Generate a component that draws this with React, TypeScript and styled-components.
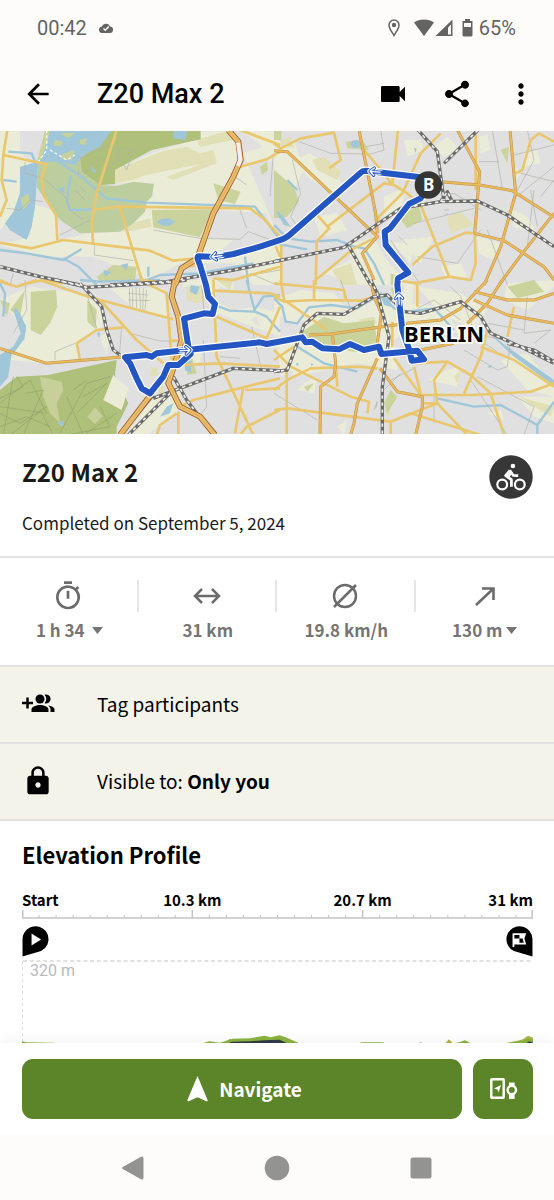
import React from "react";
import styled, { createGlobalStyle } from "styled-components";
import { MdArrowBack, MdVideocam, MdShare, MdMoreVert, MdLock, MdOutlineTimer } from "react-icons/md";

const sans = `"Noto Sans CJK SC", "Noto Sans", sans-serif`;
const roboto = `Roboto, "Liberation Sans", sans-serif`;

const GlobalStyle = createGlobalStyle`
  *, *::before, *::after { box-sizing: border-box; }
  body { margin: 0; background: #fff; color: #000; font-family: ${sans}; }
  h1, h2, p { margin: 0; }
  button { border: 0; padding: 0; background: none; color: inherit; font: inherit; cursor: pointer; }
  svg { display: block; flex: none; }
`;

const Screen = styled.div`
  min-height: 100vh;
  display: flex;
  flex-direction: column;
  overflow-x: hidden;
`;

const StatusBar = styled.div`
  display: flex;
  align-items: center;
  justify-content: space-between;
  height: 56px;
  padding: 0 38px 0 37px;
  background: #fdfcfa;
  color: #646462;
  font: 400 20px/24px ${roboto};
`;

const StatusGroup = styled.div<{ $gap: number }>`
  display: flex;
  align-items: center;
  gap: ${(p) => p.$gap}px;
`;

const AppBar = styled.header`
  display: flex;
  align-items: center;
  height: 75px;
  padding: 0 17px 0 22px;
  background: #fdfcfa;
`;

const AppTitle = styled.h1`
  flex: 1;
  margin-left: 43px;
  font: 500 27px/36px ${roboto};
`;

const AppActions = styled.div`
  display: flex;
  gap: 32px;
`;

const IconButton = styled.button`
  display: grid;
  place-items: center;
  width: 32px;
  height: 32px;
`;

const MapView = styled.svg`
  width: 100%;
  height: auto;
  background: #e0e0e0;
`;

const Summary = styled.section`
  display: flex;
  justify-content: space-between;
  padding: 21px 21px 21px 22px;
  border-bottom: 2px solid #e2e2e2;
`;

const TourTitle = styled.h2`
  color: #1a1a1a;
  font-size: 24px;
  line-height: 34px;
`;

const TourDate = styled.p`
  margin-top: 22px;
  color: #1a1a1a;
  font-size: 17px;
  line-height: 24px;
`;

const Stats = styled.section`
  display: grid;
  grid-template-columns: repeat(4, 1fr);
  padding: 22px 0;
  border-bottom: 2px solid #e2e2e2;
`;

const StatCell = styled.div`
  display: flex;
  flex-direction: column;
  align-items: center;
  gap: 6px;
  padding-bottom: 1px;
  color: #6b6b6b;
`;

const StatIcon = styled.div`
  display: grid;
  place-items: center;
  width: 100%;
  height: 32px;
  ${StatCell}:not(:last-child) & {
    border-right: 2px solid #e6e6e6;
  }
`;

const StatValue = styled.div<{ $gap?: number }>`
  display: flex;
  align-items: center;
  gap: ${(p) => p.$gap ?? 0}px;
  color: #757575;
  font-size: 17px;
  font-weight: 700;
  line-height: 24px;
`;

const OptionRow = styled.button`
  display: flex;
  align-items: center;
  height: 77px;
  padding: 0 22px 1px;
  border-bottom: 2px solid #e1e1df;
  background: #f4f3ea;
  font-size: 19px;
  line-height: 28px;
  text-align: left;
`;

const OptionIcon = styled.span`
  width: 75px;
`;

const Elevation = styled.section`
  padding: 18px 21px 0 22px;
`;

const SectionTitle = styled.h2`
  font-size: 22px;
  line-height: 30px;
`;

const RulerLabels = styled.div`
  display: grid;
  grid-template-columns: repeat(6, 1fr);
  margin-top: 21px;
  font-size: 15px;
  font-weight: 700;
  line-height: 20px;
  white-space: nowrap;
`;

const RulerLabel = styled.span<{ $span?: number; $align: string }>`
  grid-column: span ${(p) => p.$span ?? 1};
  justify-self: ${(p) => p.$align};
`;

const Chart = styled.svg`
  width: 100%;
  height: auto;
`;

const ActionBar = styled.div`
  display: flex;
  gap: 11px;
  padding: 16px 21px 16px 22px;
  background: #fff;
  box-shadow: 0 -2px 12px rgba(0, 0, 0, 0.05);
`;

const GreenButton = styled.button<{ $grow?: boolean }>`
  display: flex;
  align-items: center;
  justify-content: center;
  gap: 11px;
  flex: ${(p) => (p.$grow ? "1" : "0 0 60px")};
  height: 60px;
  padding-left: ${(p) => (p.$grow ? 5 : 2)}px;
  border-radius: 11px;
  background: #5c8529;
  color: #fff;
  font-size: 19px;
  font-weight: 700;
  line-height: 28px;
`;

const SystemNav = styled.nav`
  flex: 1;
  display: flex;
  align-items: center;
  justify-content: center;
  gap: 112px;
  min-height: 64px;
  background: #fdfcfa;
`;

/* The map is drawn as four tiles; each layer lists one path per tile: NW, NE, SW, SE. */
const tileOrigins = [
  [0, 0],
  [822, 0],
  [0, 450],
  [822, 450],
];

type Layer = { tiles: string[]; fill?: string; strokes?: [string, number, string?][] };

const mapLayers: Layer[] = [
  {
    fill: "#ebecd7",
    tiles: [
      "M345 120 465 65 600 25V0H690L712 60 705 120 640 240 590 380 520 385 440 355 380 250 460 200V160H345ZM0 0H60V60L100 120 60 160 50 240 0 300ZM105 225 160 240 180 300 170 330 270 310 440 300 580 325 700 330 640 380 830 330 800 250 660 240 700 120 790 90 840 95V0H720L790 50 730 70 840 330V465H760L700 400 540 400 450 450 280 380 130 380 60 360 0 345 90 320Z",
      "M0 40 60 30 90 120 60 180 45 260 0 230ZM60 90 105 70 180 110 205 170 175 190 100 140ZM120 260 190 250 220 300 140 320ZM330 200 395 170 380 240 330 260ZM225 345 300 320 330 380 400 465H250L150 430 230 390ZM350 335 420 345 410 400ZM480 50 520 20 560 60 510 80ZM615 20 640 15 650 60 620 70ZM700 230 760 260 790 310 720 290ZM725 110 740 130 720 160ZM390 30 440 30 450 60 400 80ZM380 330 480 320 440 400ZM610 320 680 340 660 390 615 370ZM500 410 560 400 580 440 520 450ZM750 70 790 60 800 100 750 110Z",
      "M0 60 90 20 240 40 310 80 305 140 230 190 235 235 140 250 30 240 50 200 75 160 20 80ZM330 25H490L505 110 400 85ZM330 150 320 225 300 170ZM550 20 620 15 650 100 840 170V100L760 80 700 90 640 60 660 20 700 30 700 0H545ZM380 465 460 350 545 330 530 400 440 465ZM580 220 605 210 600 245 570 255ZM750 120 770 110 780 140Z",
      "M80 150 110 100 190 105 310 60 500 80 560 160 390 160 360 180 370 270 250 250 60 290 30 200ZM0 60 80 30 180 40 220 90 60 130 0 100ZM395 0 420 10 410 120 380 100ZM430 20 560 40 640 90 600 150 500 100ZM460 300 520 270 560 260 550 320ZM700 10 840 0V20L760 90 690 60ZM680 240 760 220 840 320V350L760 330ZM730 350 840 350V430L780 410ZM10 200 60 180 70 260 20 290ZM90 310 130 290 120 340 70 330ZM190 440 220 420 210 465ZM640 400 680 390 690 420Z",
    ],
  },
  {
    fill: "#e0dfb6",
    tiles: [
      "M345 120 490 62 560 50 600 70 640 60 650 95 560 110 440 135 400 150 345 160ZM590 30 690 0 700 30 600 50ZM500 140 640 90 650 100 520 150ZM380 285 450 265 455 290 370 305Z",
      "M520 260 560 245 600 285 530 310ZM115 90 150 80 200 125 190 150 130 120ZM175 420 230 400 250 465H200ZM20 30 50 20 60 50 20 55Z",
      "M455 265 470 260 475 285 450 290ZM560 20 615 15 625 60 590 70 560 60ZM650 0H700L690 30ZM470 310 490 300 490 340 475 345ZM720 405 745 400 740 425Z",
      "M360 20 380 20 370 80 350 60ZM735 350 840 380 830 410ZM250 120 300 110 310 130ZM330 390 350 380 345 420ZM540 290 560 270 550 310Z",
    ],
  },
  {
    fill: "#cad39c",
    tiles: [
      "M135 0H345L250 90 110 100ZM455 240 640 238 600 322 460 292ZM640 160 722 185 705 222 655 210ZM290 440 340 405 410 410 405 450 300 455ZM780 110 800 95 805 120 785 135Z",
      "M0 120 60 170 75 215 40 260 0 265ZM365 250 435 230 445 270 400 295ZM215 35 265 30 285 60 220 55ZM0 0H22V30H0ZM350 430 380 440 370 465H350ZM680 60 705 50 700 100Z",
      "M92 35 168 30 172 80 150 130 122 165 92 150ZM262 60 290 90 287 148 262 125ZM30 90 75 30 60 110ZM0 60 30 70 20 110ZM560 285 575 230 590 280Z",
      "M85 155 150 110 210 130 300 120 312 205 240 215 150 200 85 180ZM700 20 780 0 810 35 730 55ZM90 320 120 310 100 335ZM330 370 350 330 370 350 340 400ZM350 25 370 20 365 60Z",
    ],
  },
  {
    fill: "#bccd9e",
    tiles: [
      "M115 95 240 80 245 125 300 165 350 168 400 155 462 162 455 200 440 215 435 245 400 280 360 305 240 310 180 270 165 250 130 200 110 170Z",
      "",
      "",
      "",
    ],
  },
  {
    fill: "#aec07a",
    tiles: [
      "M330 0H602V28L455 60 345 120V162L300 165 245 125 240 85 290 50Z",
      "",
      "M0 330 50 290 145 285 350 240 345 285 385 370 350 440 350 465H0Z",
      "",
    ],
  },
  {
    fill: "#c8d09a",
    tiles: ["", "", "M120 290 185 305 190 330 170 370 180 430 150 400 130 350ZM262 410 285 382 308 408 285 432Z", ""],
  },
  { fill: "#ebecd7", tiles: ["", "", "M340 285 385 325 365 390 310 360Z", ""] },
  {
    fill: "#9fc6d9",
    tiles: [
      "M150 0H335L300 50 250 75 225 105 165 95 120 95 140 40ZM60 110 115 95 110 160 105 230 95 290 80 330 30 300 15 280 40 245 60 190ZM520 0H562L555 30 520 25ZM470 275Q497 255 525 275 500 300 470 275ZM175 175 195 170 190 195ZM270 105 290 125 280 130ZM360 405 385 400 380 420ZM310 420 335 425 315 440ZM830 240 840 250V270Z",
      "M230 42A15 12 0 1 0 260 42 15 12 0 1 0 230 42ZM5 243 25 255 50 290 30 285ZM420 55 428 55 425 70Z",
      "M40 90 60 100 78 145 70 180 35 220 25 290 0 320V225L40 200 62 160ZM555 230 575 245 572 280 555 270ZM480 410 500 380 520 370 510 400ZM290 160 300 155 298 175ZM170 430 190 420 190 440ZM572 15 598 20 590 45 570 35Z",
      "M320 50 350 55 350 80 330 75ZM640 155 700 200 840 300V318L720 230ZM640 260 652 255 650 265ZM65 250 75 250 70 258ZM110 250 120 252 112 258Z",
    ],
  },
  {
    fill: "#c6d19c",
    tiles: [
      "M165 30 190 35 180 50 160 45ZM180 10 225 8 205 25ZM240 30 262 25 255 45 240 42ZM180 75 225 60 215 90 190 90ZM62 205 85 190 90 215 70 240Z",
      "",
      "",
      "",
    ],
  },
  {
    strokes: [["#9fc6d9", 7]],
    tiles: [
      "M155 80 250 145 320 205 440 218 765 230 800 275 840 330M212 135 200 215 210 240 280 238M0 360 80 370 190 390 245 357M190 385 235 410 290 465M400 465 480 435 600 430 760 400M735 380 745 465M445 410V440M25 65 95 70 105 95M10 150 50 155",
      "M0 285 40 325 110 335 190 330 240 350 270 355 300 400 330 465M0 340 100 358M40 150 70 180",
      "M45 85 75 140 70 175 40 215M0 10 15 40 10 110M630 70 690 92 760 95 790 50 840 45M740 0 765 95 800 110 840 155M240 0 300 5 480 0",
      "M0 55 25 80 35 125 70 130 105 82 170 75 250 85 320 40 360 85 400 95 480 85 540 150M70 200 150 250 250 275M490 355 600 380 680 375 790 435 840 365M790 435V465",
    ],
  },
  {
    strokes: [["#fafaf5", 4, "9 7"]],
    tiles: ["M140 0 140 60 115 95M150 60 200 90 225 75", "", "", ""],
  },
  {
    strokes: [["#b0b0ab", 2]],
    tiles: [
      "M75 95V130L130 145 200 205 210 240 250 270M240 85 320 50 400 60 380 120 345 60M250 130 300 80 330 120 360 60M20 235 60 240 90 210 130 215M180 315 270 270M283 345V375L400 392M460 300 600 325 720 328 745 305 840 340M720 240 740 295M690 130 740 165M820 70 810 200M725 440 840 420M750 430 830 465M225 180 255 210M240 170 260 190M40 430 30 465M235 120 237 135",
      "M75 35 170 70 290 72 330 60 320 0M55 90 80 190 50 260 70 290M655 0 685 175M615 95H675M720 75 840 45M840 110 715 210M740 130 840 155M770 180 790 290M375 320 400 345M420 280 600 235M430 380 550 400 620 300M620 240 540 190 500 195M510 240H525M512 252H522M275 50 330 40M760 0 780 90 720 200M800 200 840 150M440 465 350 330M640 300 700 465M780 180 760 350",
      "M388 25 390 80M398 25V82M408 22 410 85M418 22 422 88M430 25 428 90M440 30 435 92M385 40 445 45M385 60 450 62M365 142 358 228M390 160 480 183H530M165 240V215L225 190M75 0 80 90 40 160M605 0 612 100M610 180 620 380 605 400M755 140 785 270M660 230 720 235M260 40 290 145",
      "M200 0 230 90M530 20 560 50 600 150M760 50 750 160 830 150 780 190M570 210 670 270 700 260 710 180M610 290 780 380 750 465M480 340V430M640 170 690 180M430 85 480 60 560 120M350 300 420 265M300 390 310 365 305 385M590 300 700 465M600 170 670 215M0 340 130 420M750 150 640 130M380 280 330 330",
    ],
  },
  {
    strokes: [["#93a26b", 2]],
    tiles: [
      "",
      "",
      "M0 355 70 320 50 290M0 380 140 400 90 300 0 370M40 290 10 465M30 465 140 380 60 430 0 400M80 340 130 330 70 465M160 465 120 390M230 400 320 310 250 350M180 460 260 310 330 290M200 350 250 465 350 400M200 465 330 440 300 380M220 330 260 300M0 440 80 410 150 440",
      "",
    ],
  },
  {
    strokes: [["#e9c76f", 8]],
    tiles: [
      "M22 0 10 75 5 150 20 210 0 260M10 75 140 103 125 140 130 195 168 255 172 330M350 0 290 190 275 280 280 345M0 338 95 355 190 330 450 362 520 392 590 385M275 240 360 230 750 235 790 265 840 320M360 232 425 450 470 455M720 0 840 45M715 112 800 88 840 65M0 450 30 465M60 465 130 450 190 460M535 415 610 400M640 445 700 450 840 410M820 330 840 380",
      "M0 40 20 55 80 25 180 8 200 90 165 115M372 0 355 160M500 10 440 70 385 190 315 260 305 300M160 290 330 160 360 165 400 190 440 225 490 350 525 440 590 450 605 400 602 310M525 440 420 460M415 405 475 350 575 308 602 310M125 450 240 355 310 320M130 255 165 295 128 335 125 465M22 345V465M605 0V180M795 10 770 30 745 120 725 130M795 10 840 35M270 60 330 130 355 165M300 235 310 270",
      "M0 5 50 20 110 0M120 0 250 45 300 60 520 118M300 60 410 180 490 250M370 142 290 150 230 190 240 240M420 0 500 40 515 240M640 0 650 230 720 380 760 465M640 32 810 40 840 50M650 110 800 175 840 80M545 255 660 250 840 260M540 380 580 360 730 322 840 295M730 322 705 460M735 330 840 325M840 390 740 440 720 465M535 395V465M470 465 480 435 530 400M515 182H535",
      "M0 10 210 30 215 60M120 0V60L30 65 0 50M20 0 30 60 160 150M120 60 260 62 300 50M0 210 50 260 230 350 285 365 280 400M0 330 40 300 110 265 250 260 310 265M38 260V465M0 390 40 385 350 425 410 400 620 465M360 235 440 345 600 345 770 335 840 310M420 260 440 340M420 250 520 245 590 285 650 340M520 245 480 300 490 370 350 425V465M490 370 580 465M450 370 490 370M650 340 690 465M640 150 620 230 570 340M620 200 720 240 840 320M700 170 720 80M0 240 60 200M185 250 190 320M360 0 430 10V80M355 125V200",
    ],
  },
  {
    strokes: [
      ["#bd924a", 9],
      ["#e8b95f", 6],
    ],
    tiles: [
      "",
      "M255 0 275 100 305 250 310 310M0 62 40 65 310 320 265 370 300 450M550 0 617 125 602 310M500 155 617 165 715 182 840 262M708 0 725 190 680 350 630 465M602 310 690 332 810 410 840 450M840 250 745 370 675 465",
      "M0 205 140 250 375 230",
      "M105 165 170 162 400 130 500 120 560 85 640 0M290 0 300 50 322 100 310 190M175 160 185 250 180 290 140 320 138 465M310 235 250 370 240 430 230 465M318 265 370 335 445 350V380L425 465M580 130 640 70 685 0M600 35 700 60 780 60 840 40M600 60 700 105 840 130M440 210 540 190",
    ],
  },
  {
    strokes: [
      ["#6a6a68", 10],
      ["#efefed", 5, "10 11"],
    ],
    tiles: [
      "M0 410 120 440 240 465M330 465 500 455 700 420 840 392",
      "M0 395 210 352 300 290 380 235 500 215 610 213 700 255 840 350M432 0 490 65 510 210M612 0 510 100M225 350 290 465M500 215 520 185 535 215",
      "M170 0 260 22 500 8 560 0M240 10 305 80 320 150 340 210 360 225M840 272 700 265 620 295 460 355M385 465 520 330M520 290 560 360 640 465M380 440 460 345",
      "M0 275 40 270 90 135 130 100 210 103 300 50 340 45 390 95 440 100 560 65 620 110 650 160 740 200 840 250M290 0 310 40 345 170 325 320V465M700 190 780 210 840 245",
    ],
  },
  {
    strokes: [
      ["#9c5a30", 18],
      ["#e9bd6a", 13],
      ["#c48b45", 1],
    ],
    tiles: [
      "M685 0 715 35 722 90 700 140 640 250 592 385 545 415 525 465",
      "",
      "M525 0 515 50 535 110 545 180 525 250 505 310 540 380 600 410 645 465M452 345 360 465",
      "",
    ],
  },
  { strokes: [["#f3eeee", 12]], tiles: ["M714 38 721 88 714 108", "", "", ""] },
];

const routePath =
  "M1285 165 1262 142 1097 122Q1088 122 1082 128L865 318Q855 325 846 328L780 350 700 372 650 381 596 379Q590 380 594 390L600 405 618 465 625 500 645 522 638 552 612 550 552 566 565 650 572 672 535 705 505 705 490 740 450 790 425 775 410 745 390 700 375 682 440 675 455 680 470 670 560 660 780 637 800 642 907 622 917 637 937 635 967 655 1017 658 1050 642 1092 660 1137 650 1144 672 1252 662 1272 688 1235 692 1228 660 1207 600 1192 465 1194 445 1225 428 1157 345 1154 305 1170 295 1227 222 1262 205 1285 165";

const arrows = [
  [1122, 125, 5],
  [648, 379, -8],
  [558, 661, 176],
  [1197, 505, 88],
];

function TourMap() {
  return (
    <MapView viewBox="0 3 1662 909" role="img" aria-label="Tour map of Berlin">
      {mapLayers.map((layer, i) => (
        <g key={i} fill={layer.fill ?? "none"} strokeLinejoin="round">
          {(layer.strokes ?? [["none", 0]]).map(([stroke, width, dash], j) => (
            <g key={j} stroke={stroke as string} strokeWidth={width as number} strokeDasharray={dash as string | undefined}>
              {layer.tiles.map(
                (d, k) => d && <path key={k} d={d} transform={`translate(${tileOrigins[k][0]} ${tileOrigins[k][1]})`} />
              )}
            </g>
          ))}
        </g>
      ))}
      <g fill="none" strokeLinejoin="round" strokeLinecap="round">
        <path d={routePath} stroke="#fff" strokeWidth="25" />
        <path d={routePath} stroke="#2355c3" strokeWidth="18" />
        {arrows.map(([x, y, angle]) => (
          <g key={x} transform={`translate(${x} ${y}) rotate(${angle})`}>
            <path d="M-12 0H18M0-11-12 0 0 11" stroke="#fff" strokeWidth="16" />
            <path d="M-12 0H24M0-11-12 0 0 11" stroke="#2355c3" strokeWidth="10" />
            <path d="M-12 0H18M0-11-12 0 0 11" stroke="#fff" strokeWidth="4" />
          </g>
        ))}
      </g>
      <circle cx="1285" cy="165" r="41" fill="#353535" />
      <g fontFamily="Noto Sans, sans-serif" fontWeight="700">
        <text x="1286" y="183" fontSize="51" textAnchor="middle" fill="#fff">B</text>
        <text x="1212" y="637" fontSize="66" stroke="#fff" strokeWidth="11" strokeLinejoin="round" paintOrder="stroke">BERLIN</text>
      </g>
    </MapView>
  );
}

const Caret = () => (
  <svg width="11" height="8" viewBox="0 0 11 8" fill="currentColor"><path d="M0 1h11L5.500 8z" /></svg>
);

const DistanceIcon = () => (
  <svg width="28" height="28" viewBox="0 0 28 28" fill="none" stroke="currentColor" strokeWidth="2.500">
    <path d="M2 14h24M9 7l-7 7 7 7M19 7l7 7-7 7" />
  </svg>
);

const AverageIcon = () => (
  <svg width="28" height="28" viewBox="0 0 28 28" fill="none" stroke="currentColor" strokeWidth="2.500">
    <circle cx="14" cy="14" r="11" />
    <path d="M3 25 25 3" />
  </svg>
);

const AscentIcon = () => (
  <svg width="28" height="28" viewBox="0 0 28 28" fill="none" stroke="currentColor" strokeWidth="2.600">
    <path d="M5 23 22 7M11 6.500h11.500V18" />
  </svg>
);

const CyclistBadge = () => (
  <svg width="44" height="44" viewBox="0 0 44 44" role="img" aria-label="Cycling">
    <circle cx="22" cy="22" r="21.700" fill="#373737" />
    <g fill="none" stroke="#fff" strokeWidth="2.200">
      <circle cx="13.200" cy="29.500" r="4.900" />
      <circle cx="30.800" cy="29.500" r="4.900" />
    </g>
    <circle cx="23.900" cy="11" r="2.300" fill="#fff" />
    <path d="m21 15.500-4.300 5.200 5.700 4v7" fill="none" stroke="#fff" strokeWidth="2.800" strokeLinejoin="round" />
    <path d="m20.800 15.200 3.500 5.200 4.900.2M22.500 16.500l-3.500 6" fill="none" stroke="#fff" strokeWidth="2.600" strokeLinejoin="round" />
  </svg>
);

const AddPeopleIcon = () => (
  <svg width="33" height="20" viewBox="0 0 33 20">
    <path d="M0 9h11M5.500 3.500v11" fill="none" stroke="#000" strokeWidth="2.500" />
    <circle cx="18" cy="5" r="4.500" />
    <path d="M9.500 18v-2.500c0-3 5-4.500 8.500-4.500s8.500 1.500 8.500 4.500V18zM22.500.8a4.500 4.500 0 1 1 0 8.400 6.500 6.500 0 0 0 0-8.400zM26 11.500c3.500.5 6.500 1.800 6.500 4V18h-4v-2.500c0-1.600-1-3-2.500-4z" />
  </svg>
);

const ticks = Array.from({ length: 31 }, (_, i) => i * 17);

function ElevationChart() {
  return (
    <Chart viewBox="0 0 510 133" role="img" aria-label="Elevation along the tour">
      <g fill="none" stroke="#c4c4c4">
        {ticks.map((x) => (
          <path key={x} strokeWidth={x % 170 ? 1 : 1.5} d={`M${x === 0 ? 0.75 : x === 510 ? 509.25 : x} ${x % 170 ? 5 : 0}V8`} />
        ))}
        <path d="M0 8H510" strokeWidth="1.500" />
        <path d="M1 51H510" stroke="#d8d8d8" strokeWidth="1.500" strokeDasharray="4 2.700" />
        <path d="M.5 51V134" stroke="#dedede" strokeDasharray="3 3" />
      </g>
      <path d="M.5 46.500V29.500A13 13 0 1 1 19 41z" />
      <path d="m9.500 23.500 9.500 6-9.500 6z" fill="#fff" />
      <path d="M509.500 46.500V29.500A13 13 0 1 0 491 41z" />
      <path d="M490.500 37V24h11.500l-1.500 4.500 1.500 5h-11.500" fill="none" stroke="#fff" strokeWidth="1.800" />
      <path d="M496.500 24h4.500v4.500h-4.500zM491 28.500h5.500V33H491z" fill="#fff" />
      <text x="8" y="66" fill="#bababa" fontFamily="Roboto, sans-serif" fontSize="16">320 m</text>
      <path fill="#b0b04a" d="M197 134 203 131 208 128.500 212 134zM422 134 426 129 431 134zM477 134 493 131 500 129 505 125.500 510 127.500V134z" />
      <path fill="#8ab440" d="M0 131 4 132 32 132.500V134H0zM176 134 187 131 197 132.500 203 131 210 128.500 228 128 242 125.500 248 127 257 125 263 127 277 133V134zM338 132H361V134H338zM394 134 398 132 402 134zM430 133.500 438 131.500 442 130 448 133V134zM480 134 490 131.500 500 130.500 505 128 510 129.500V134z" />
      <path fill="#303a48" d="M202 134 210 131.500 228 131 242 130 257 129.500 267 134zM502 134 506 131 510 132.500V134z" />
    </Chart>
  );
}

export default function App() {
  return (
    <Screen>
      <GlobalStyle />
      <StatusBar>
        <StatusGroup $gap={12}>
          <span>00:42</span>
          <svg width="14" height="12" viewBox="0 0 14 12">
            <path d="M3.500 11A3.200 3.200 0 0 1 3 4.500 4.200 4.200 0 0 1 11 4.600 3.200 3.200 0 0 1 10.600 11z" fill="#646462" />
            <path d="m4.500 6.500 1.800 1.800L9.800 4.500" stroke="#fff" strokeWidth="1.400" fill="none" />
          </svg>
        </StatusGroup>
        <StatusGroup $gap={4}>
          <svg width="87" height="20" viewBox="0 0 87 20">
            <g fill="none" stroke="currentColor" strokeWidth="1.500">
              <path d="M6 17.500C4.500 14.500 1 11 1 7a5 5 0 0 1 10 0c0 4-3.500 7.500-5 10.500z" />
              <circle cx="6" cy="7" r="2.200" fill="currentColor" stroke="none" />
            </g>
            <g fill="currentColor">
              <path d="M26 4.500C31 .5 41 .5 46 4.500L36 18z" />
              <path d="M47.500 18 64.500 1.500V18z" />
              <path d="M77 1h5v2h2.500v14.500l-1 1h-8l-1-1V3H77z" />
            </g>
            <path d="M60 9.500v7h3v-10zM76 5h7v4h-7z" fill="#fdfcfa" />
          </svg>
          <span>65%</span>
        </StatusGroup>
      </StatusBar>
      <AppBar>
        <IconButton aria-label="Back"><MdArrowBack size={32} /></IconButton>
        <AppTitle>Z20 Max 2</AppTitle>
        <AppActions>
          <IconButton aria-label="Video"><MdVideocam size={32} /></IconButton>
          <IconButton aria-label="Share"><MdShare size={32} /></IconButton>
          <IconButton aria-label="More options"><MdMoreVert size={32} /></IconButton>
        </AppActions>
      </AppBar>
      <TourMap />
      <Summary>
        <div>
          <TourTitle>Z20 Max 2</TourTitle>
          <TourDate>Completed on September 5, 2024</TourDate>
        </div>
        <CyclistBadge />
      </Summary>
      <Stats>
        <StatCell>
          <StatIcon><MdOutlineTimer size={32} /></StatIcon>
          <StatValue as="button" $gap={7}>1 h 34 <Caret /></StatValue>
        </StatCell>
        <StatCell>
          <StatIcon><DistanceIcon /></StatIcon>
          <StatValue>31 km</StatValue>
        </StatCell>
        <StatCell>
          <StatIcon><AverageIcon /></StatIcon>
          <StatValue>19.8 km/h</StatValue>
        </StatCell>
        <StatCell>
          <StatIcon><AscentIcon /></StatIcon>
          <StatValue as="button" $gap={4}>130 m <Caret /></StatValue>
        </StatCell>
      </Stats>
      <OptionRow>
        <OptionIcon><AddPeopleIcon /></OptionIcon>
        Tag participants
      </OptionRow>
      <OptionRow>
        <OptionIcon><MdLock size={32} /></OptionIcon>
        <span>Visible to: <strong>Only you</strong></span>
      </OptionRow>
      <Elevation>
        <SectionTitle>Elevation Profile</SectionTitle>
        <RulerLabels>
          <RulerLabel $align="start">Start</RulerLabel>
          <RulerLabel $align="center" $span={2}>10.3 km</RulerLabel>
          <RulerLabel $align="center" $span={2}>20.7 km</RulerLabel>
          <RulerLabel $align="end">31 km</RulerLabel>
        </RulerLabels>
        <ElevationChart />
      </Elevation>
      <ActionBar>
        <GreenButton $grow>
          <svg width="21" height="26" viewBox="0 0 21 26" fill="#fff"><path d="M10.500 0 20.800 24.500l-1 1-9.300-4.200-9.300 4.200-1-1z" /></svg>
          Navigate
        </GreenButton>
        <GreenButton aria-label="Send to device">
          <svg width="28" height="22" viewBox="0 0 28 22" fill="none" stroke="#fff">
            <rect x="1.300" y="1.300" width="12.400" height="18.400" rx=".5" strokeWidth="2.400" />
            <path d="m11 7-2.500 7.500-1-3-3.500-1z" fill="#fff" stroke="none" />
            <circle cx="21.800" cy="12" r="4.200" strokeWidth="2.400" />
            <path d="M19 4.500h5.600V8H19zM19 16.200h5.600V21H19z" fill="#fff" stroke="none" />
          </svg>
        </GreenButton>
      </ActionBar>
      <SystemNav>
        <IconButton aria-label="Back">
          <svg width="22" height="24" viewBox="0 0 22 24" fill="#939391"><path d="M.8 11 19 .8Q21.500 0 21.500 2.500v19q0 2.500-2.500 1.700L.8 13q-1.500-1 0-2z" /></svg>
        </IconButton>
        <IconButton aria-label="Home">
          <svg width="26" height="26" viewBox="0 0 26 26" fill="#939391"><circle cx="13" cy="13" r="12.300" /></svg>
        </IconButton>
        <IconButton aria-label="Recent apps">
          <svg width="22" height="22" viewBox="0 0 22 22" fill="#939391"><rect x=".5" y=".5" width="21" height="21" rx="2.500" /></svg>
        </IconButton>
      </SystemNav>
    </Screen>
  );
}
